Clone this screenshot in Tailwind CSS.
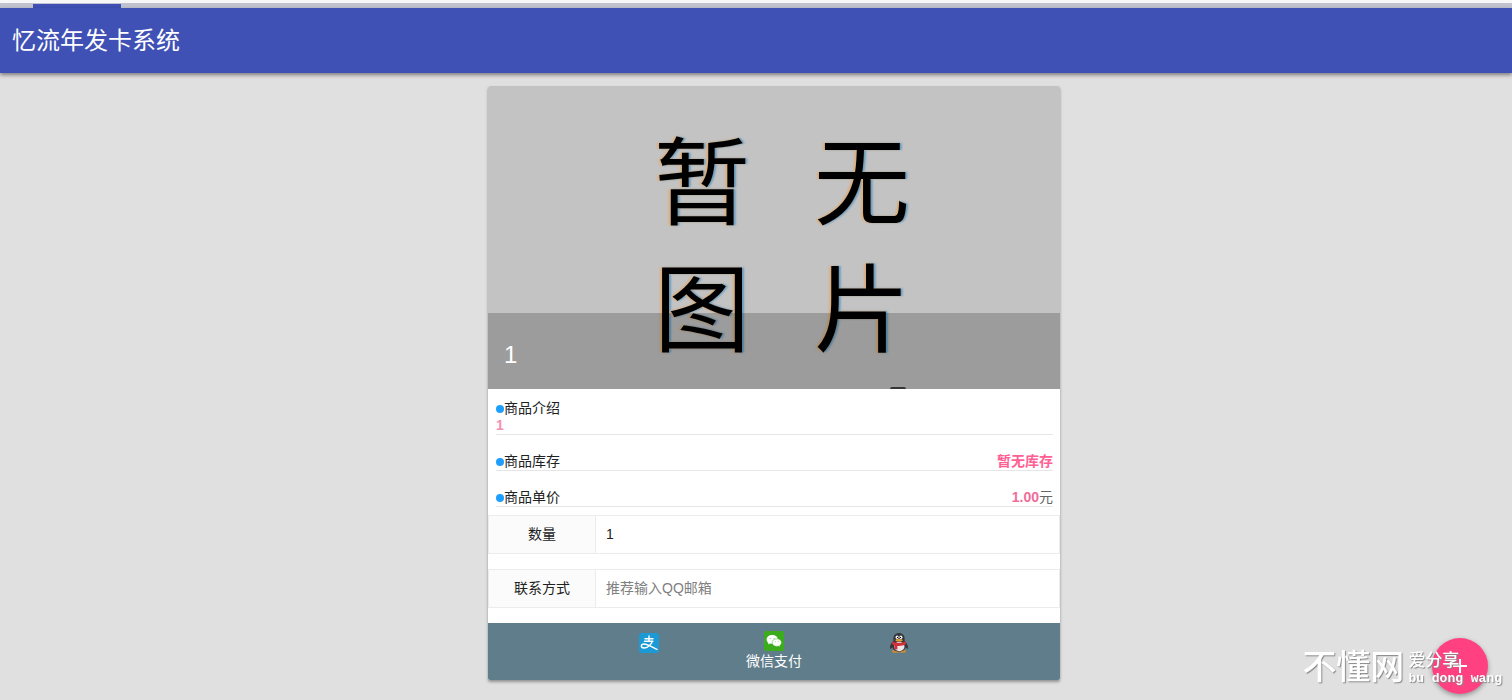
<!DOCTYPE html>
<html lang="zh-CN">
<head>
<meta charset="utf-8">
<meta name="viewport" content="width=device-width, initial-scale=1">
<title>忆流年发卡系统</title>
<script src="https://cdn.jsdelivr.net/npm/@tailwindcss/browser@4"></script>
</head>
<body class="min-h-screen overflow-x-hidden bg-[#e0e0e0] font-['Liberation_Sans','Noto_Sans_CJK_SC',sans-serif] text-sm text-[#212121]">
  <!-- Tab strip -->
  <div class="h-2 border-t-3 border-[#f7f7f7] bg-[#c0c3cf] pl-[33px] pt-px">
    <div class="h-1 w-[88px] bg-[#3f51b5]"></div>
  </div>
  <header class="flex h-[65px] items-center bg-[#3f51b5] px-3 shadow-[0_2px_4px_rgba(0,0,0,0.45)]">
    <h1 class="text-2xl text-white">忆流年发卡系统</h1>
  </header>

  <main class="pl-9 pt-[13px]">
    <form class="mx-auto w-full max-w-[572px] overflow-hidden rounded-xs bg-white shadow-[0_2px_3px_rgba(0,0,0,0.35)]">
      <!-- Product picture with its title band -->
      <div class="relative h-[303px] overflow-hidden bg-[#c3c3c3]">
        <div class="flex flex-col items-center gap-[31px] pl-4 pt-[42px] font-['Noto_Sans_CJK_SC',sans-serif] text-[96px] leading-[96px] text-black [text-shadow:-2px_0_2px_#dcae7c,2px_0_2px_#6b9dc0]">
          <div class="flex gap-16"><span>暂</span><span>无</span></div>
          <div class="flex gap-16"><span>图</span><span>片</span></div>
        </div>
        <div class="absolute bottom-0 right-[154px] h-[2px] w-4 rounded-t-full bg-[#444]"></div>
        <div class="absolute inset-x-0 bottom-0 flex h-[76px] items-center bg-black/20 px-4 pt-2">
          <h2 class="text-2xl text-white">1</h2>
        </div>
      </div>

      <div class="pl-2 pr-[7px] pt-[11px] leading-[17px]">
        <section class="border-b border-[#e6e6e6]">
          <h3 class="flex items-center"><span class="size-2 rounded-full bg-[#1e9fff]"></span>商品介绍</h3>
          <p class="font-bold text-[#f48fb1]">1</p>
        </section>
        <section class="mt-[18px] flex justify-between border-b border-[#e6e6e6]">
          <h3 class="flex items-center"><span class="size-2 rounded-full bg-[#1e9fff]"></span>商品库存</h3>
          <p class="font-bold text-[#ff6094]">暂无库存</p>
        </section>
        <section class="mt-[18px] flex justify-between border-b border-[#e6e6e6]">
          <h3 class="flex items-center"><span class="size-2 rounded-full bg-[#1e9fff]"></span>商品单价</h3>
          <p class="text-[#666]"><b class="text-[#f06d9b]">1.00</b>元</p>
        </section>
      </div>

      <div class="mt-2 flex h-[39px] border border-[#ececec]">
        <label for="qty" class="flex w-[107px] items-center justify-center border-r border-[#ececec] bg-[#fbfbfb] pb-0.5">数量</label>
        <input id="qty" type="text" value="1" class="min-w-0 flex-1 px-[10px] pb-0.5 outline-none">
      </div>
      <div class="mt-[15px] flex h-[39px] border border-[#ececec]">
        <label for="contact" class="flex w-[107px] items-center justify-center border-r border-[#ececec] bg-[#fbfbfb] pb-0.5">联系方式</label>
        <input id="contact" type="text" placeholder="推荐输入QQ邮箱" class="min-w-0 flex-1 px-[10px] pb-0.5 outline-none placeholder:text-[#808080]">
      </div>

      <div class="mt-[15px] flex h-[57px] items-start justify-center bg-[#607d8b] text-white">
        <button type="button" aria-label="支付宝支付" class="flex w-[125px] justify-center pt-[10px]">
          <svg class="size-5" viewBox="0 0 20 20" fill="none" stroke="#fff" stroke-linecap="round">
            <rect width="20" height="20" rx="3" fill="#1c9ad6" stroke="none"/>
            <path d="M6 5.800h8M10 3v5.200M5.500 8.200h8.400M13.200 8.400c-1.200 3.400-4.600 6.600-8.200 6.600-3.800 0-3.200-4 0-4 3.600 0 7.400 2.900 13 5.400" stroke-width="1.400"/>
          </svg>
        </button>
        <button type="button" class="flex w-[125px] flex-col items-center pt-2">
          <svg class="size-5" viewBox="0 0 20 20">
            <rect width="20" height="20" rx="2" fill="#3bad1c"/>
            <path d="M8.200 4C5 4 2.600 6 2.600 8.500c0 1.400.7 2.600 1.900 3.400L4 13.500l2-1c.7.2 1.400.3 2.200.3 3.200 0 5.700-1.900 5.700-4.300S11.400 4 8.200 4z" fill="#fff"/>
            <path d="M12.800 7.800c-2.700 0-4.700 1.700-4.700 3.800s2 3.800 4.700 3.800c.6 0 1.200-.1 1.700-.3l1.700.9-.4-1.500c1.100-.7 1.700-1.700 1.700-2.900 0-2.100-2-3.800-4.700-3.800z" fill="#fff" stroke="#3bad1c" stroke-width=".5"/>
            <g fill="#7fca6b"><circle cx="6.300" cy="7.500" r=".6"/><circle cx="10" cy="7.500" r=".6"/><circle cx="11.300" cy="10.700" r=".5"/><circle cx="14.300" cy="10.700" r=".5"/></g>
          </svg>
          <span class="leading-5">微信支付</span>
        </button>
        <button type="button" aria-label="QQ支付" class="flex w-[125px] justify-center pt-[10px]">
          <svg class="size-5" viewBox="0 0 20 20">
            <ellipse cx="6.500" cy="18.300" rx="3.600" ry="1.500" fill="#c98a3a"/>
            <ellipse cx="13.500" cy="18.300" rx="3.600" ry="1.500" fill="#c98a3a"/>
            <path d="M10 0C6.700 0 4.400 2.300 4.400 5.200v2.600C2.600 10 .6 12.700 1 15.300c.2 1 1.200.5 2.400-1C4 16.900 6.300 18.700 10 18.700s6-1.800 6.600-4.400c1.200 1.500 2.200 2 2.400 1 .4-2.600-1.600-5.300-3.400-7.500V5.200C15.600 2.300 13.300 0 10 0z" fill="#35373c"/>
            <ellipse cx="10.300" cy="13.500" rx="5.200" ry="4.700" fill="#ece6e6"/>
            <path d="M3.700 8.200c3.700 2.200 8.900 2.200 12.600 0l.8 2.800c-2.700 1.700-5.900 2.200-8.700 1.900v3.600l-3.200-.4.300-3.700-2.700-1.400z" fill="#d0303a"/>
            <ellipse cx="8.100" cy="4.200" rx="1.500" ry="1.800" fill="#fff"/><ellipse cx="11.900" cy="4.200" rx="1.500" ry="1.800" fill="#fff"/>
            <circle cx="8.500" cy="4.400" r=".6"/><circle cx="11.500" cy="4.400" r=".6"/>
            <ellipse cx="10" cy="7.200" rx="3.600" ry="1.200" fill="#e5a03a"/>
          </svg>
        </button>
      </div>
    </form>
  </main>

  <button type="button" aria-label="添加" class="fixed bottom-[6px] right-6 flex size-14 items-center justify-center rounded-full bg-[#ff4081] shadow-[0_2px_5px_rgba(0,0,0,0.35)]">
    <svg class="size-6" viewBox="0 0 24 24" fill="none" stroke="#fff" stroke-width="2"><path d="M12 5v14M5 12h14"/></svg>
  </button>
  <!-- Site mark laid over the corner -->
  <div class="pointer-events-none fixed bottom-[13px] right-[10px] flex items-end gap-1 font-medium text-white [text-shadow:1px_1px_1px_#888]">
    <span class="h-[44px] text-[34px] leading-[48px]">不懂网</span>
    <span class="flex flex-col">
      <span class="text-[17px] leading-5">爱分享</span>
      <span class="font-['Liberation_Mono',monospace] text-[13px] font-bold leading-4">bu dong wang</span>
    </span>
  </div>
</body>
</html>
